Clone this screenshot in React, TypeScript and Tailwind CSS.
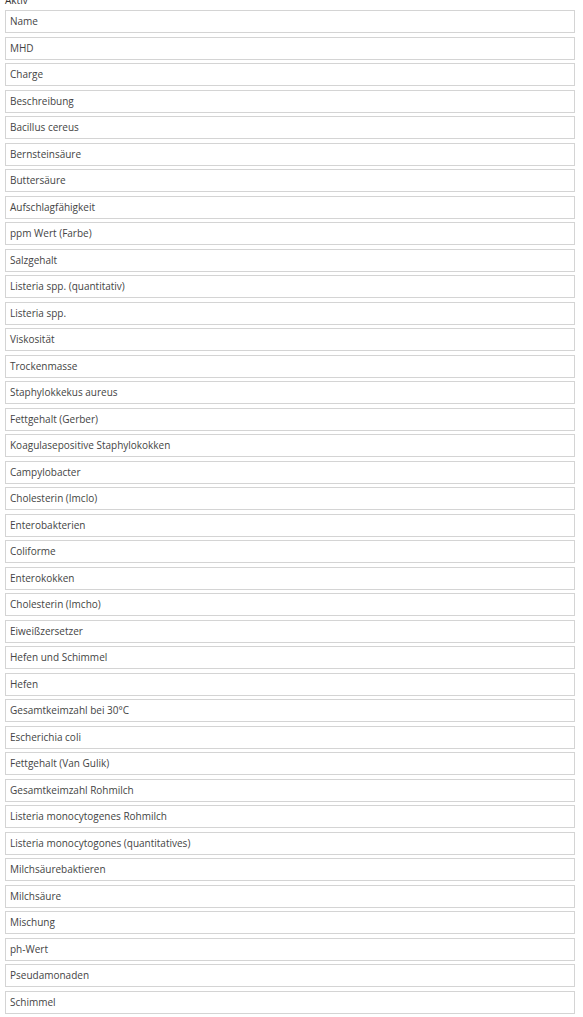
const items = [
  "Name",
  "MHD",
  "Charge",
  "Beschreibung",
  "Bacillus cereus",
  "Bernsteinsäure",
  "Buttersäure",
  "Aufschlagfähigkeit",
  "ppm Wert (Farbe)",
  "Salzgehalt",
  "Listeria spp. (quantitativ)",
  "Listeria spp.",
  "Viskosität",
  "Trockenmasse",
  "Staphylokkekus aureus",
  "Fettgehalt (Gerber)",
  "Koagulasepositive Staphylokokken",
  "Campylobacter",
  "Cholesterin (Imclo)",
  "Enterobakterien",
  "Coliforme",
  "Enterokokken",
  "Cholesterin (Imcho)",
  "Eiweißzersetzer",
  "Hefen und Schimmel",
  "Hefen",
  "Gesamtkeimzahl bei 30°C",
  "Escherichia coli",
  "Fettgehalt (Van Gulik)",
  "Gesamtkeimzahl Rohmilch",
  "Listeria monocytogenes Rohmilch",
  "Listeria monocytogones (quantitatives)",
  "Milchsäurebaktieren",
  "Milchsäure",
  "Mischung",
  "ph-Wert",
  "Pseudamonaden",
  "Schimmel",
];

const App = () => {
  return (
    <div
      className="w-[583px] h-[1017px] overflow-hidden bg-white text-[#444]"
      style={{ fontFamily: '"Open Sans", "DejaVu Sans", sans-serif' }}
    >
      <div className="-mt-[8px] pl-[5px] pr-[8px]">
        <p className="text-[10px] leading-[16px] text-[#333]">Aktiv</p>
        <div className="mt-[2px] flex flex-col gap-[3.5px]">
          {items.map((name, index) => (
            <div
              key={index}
              className="h-[23px] border border-[#d4d4d4] bg-white flex items-center pl-[4px] text-[10px]"
            >
              {name}
            </div>
          ))}
        </div>
      </div>
    </div>
  );
};
export default App;
